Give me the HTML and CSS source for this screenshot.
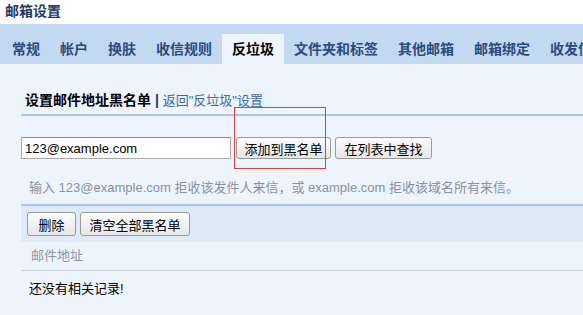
FILE: index.html
```html
<!DOCTYPE html>
<html lang="zh-CN">
<head>
<meta charset="utf-8">
<title>邮箱设置</title>
<link rel="stylesheet" href="styles.css">
</head>
<body>
<div class="page">
  <header class="top">邮箱设置</header>
  <nav class="tabs">
    <span class="tab">常规</span>
    <span class="tab">帐户</span>
    <span class="tab">换肤</span>
    <span class="tab">收信规则</span>
    <span class="tab active">反垃圾</span>
    <span class="tab">文件夹和标签</span>
    <span class="tab">其他邮箱</span>
    <span class="tab">邮箱绑定</span>
    <span class="tab">收发信设置</span>
  </nav>
  <main class="content">
    <div class="section-title"><b>设置邮件地址黑名单</b> <span class="sep">|</span> <a class="back" href="#">返回"反垃圾"设置</a></div>
    <div class="add-row">
      <input class="addr" type="text" value="123@example.com">
      <button class="btn btn-add">添加到黑名单</button>
      <button class="btn btn-find">在列表中查找</button>
    </div>
    <p class="hint">输入 123@example.com 拒收该发件人来信，或 example.com 拒收该域名所有来信。</p>
    <div class="toolbar">
      <button class="btn btn-del">删除</button>
      <button class="btn btn-clear">清空全部黑名单</button>
    </div>
    <div class="col-head">邮件地址</div>
    <div class="empty">还没有相关记录!</div>
  </main>
  <div class="highlight"></div>
</div>
</body>
</html>
```
FILE: styles.css
```css
html, body {
  margin: 0;
  padding: 0;
}
body {
  background: #eef4fc;
  font-family: "Liberation Sans", Arial, "Noto Sans CJK SC", sans-serif;
  font-size: 13px;
  color: #000;
  overflow: hidden;
}
.page {
  position: relative;
  width: 583px;
  height: 315px;
  overflow: hidden;
}
.top {
  height: 24px;
  line-height: 22px;
  background: #fff;
  padding-left: 5px;
  font-size: 14px;
  font-weight: bold;
  color: #1f3a60;
}
.tabs {
  height: 40px;
  background: #c3d9f2;
  display: flex;
  align-items: flex-end;
  padding-left: 2px;
  white-space: nowrap;
}
.tab {
  flex: none;
  height: 30px;
  line-height: 30px;
  padding: 0 10px;
  font-size: 14px;
  font-weight: bold;
  color: #2a4b7b;
}
.tab.active {
  background: #eef4fc;
  color: #000;
}
.content {
  padding-left: 21px;
}
.section-title {
  margin-top: 26px;
  line-height: 20px;
  padding: 0 0 3px 4px;
  border-bottom: 2px solid #a8c7ea;
  font-size: 14px;
}
.section-title b {
  color: #000;
}
.sep {
  font-weight: bold;
  color: #1f3a60;
}
.back {
  color: #3a6aa3;
  text-decoration: none;
  font-size: 13px;
}
.add-row {
  margin-top: 21px;
  display: flex;
  align-items: center;
  height: 22px;
}
.addr {
  box-sizing: border-box;
  width: 210px;
  height: 22px;
  margin: 0;
  padding: 0 3px;
  border: 1px solid #a9a9a9;
  border-top-color: #8a8a8a;
  background: #fff;
  font-family: "Liberation Sans", Arial, sans-serif;
  font-size: 13px;
  color: #000;
}
.btn {
  box-sizing: border-box;
  height: 22px;
  margin: 0;
  padding: 0;
  border: 1px solid #9a9a9a;
  border-radius: 3px;
  background: linear-gradient(#fcfcfc, #e6e6e6);
  font-family: "Liberation Sans", Arial, "Noto Sans CJK SC", sans-serif;
  font-size: 13px;
  color: #000;
}
.btn-add {
  width: 95px;
  margin-left: 5px;
}
.btn-find {
  width: 97px;
  margin-left: 4px;
}
.hint {
  margin: 0;
  padding: 21px 0 0 8px;
  height: 45px;
  line-height: 16px;
  box-sizing: border-box;
  color: #8691a2;
}
.toolbar {
  border-top: 2px solid #a8c6e8;
  background: #dfeaf8;
  padding: 6px 0 0 6px;
  box-sizing: border-box;
  height: 38px;
  display: flex;
  align-items: flex-start;
}
.btn-del {
  width: 49px;
  height: 24px;
}
.btn-clear {
  width: 110px;
  height: 24px;
  margin-left: 4px;
}
.col-head {
  height: 28px;
  line-height: 28px;
  padding-left: 10px;
  color: #8a97aa;
  border-bottom: 1px solid #c8d4e2;
}
.empty {
  padding-left: 8px;
  line-height: 18px;
  margin-top: 9px;
}
.highlight {
  position: absolute;
  left: 234px;
  top: 107px;
  width: 92px;
  height: 62px;
  border: 1px solid #e83a3a;
  box-sizing: border-box;
}
```
